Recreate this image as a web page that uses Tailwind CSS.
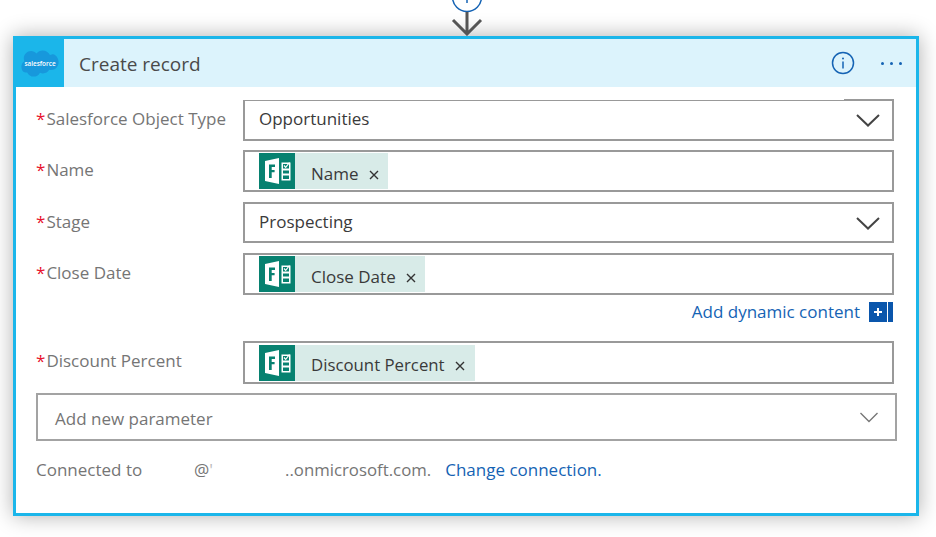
<!DOCTYPE html>
<html lang="en">
<head>
<meta charset="UTF-8" />
<title>Create record</title>
<script src="https://cdn.jsdelivr.net/npm/@tailwindcss/browser@4"></script>
</head>
<body class="bg-white h-[537px] w-[936px] overflow-hidden font-['Open_Sans',sans-serif] text-[17px]">

  <!-- connector arrow -->
  <div class="h-[36px] flex justify-center w-[906px] ml-[13px] pl-[2px]">
    <svg width="36" height="36" viewBox="0 0 36 36" fill="none">
      <circle cx="18" cy="-3" r="14.5" stroke="#1563b4" stroke-width="1.5" fill="white"/>
      <path d="M18 -9V3" stroke="#1563b4" stroke-width="1.5"/>
      <path d="M18 12V33M4 20L18 34L32 20" stroke="#555" stroke-width="3"/>
    </svg>
  </div>

  <!-- card -->
  <div class="ml-[13px] w-[906px] h-[480px] border-[3px] border-[#1bb6ea] bg-white shadow-[0_0_20px_rgba(0,0,0,0.32)]">
    <div class="flex items-center h-[48px] bg-[#dcf3fc]">
      <div class="w-[48px] h-[48px] bg-[#1bb6ea] flex items-center justify-center">
        <svg width="38" height="28" viewBox="0 0 38 28">
          <path d="M15.5 4.5C17 2.7 19.2 1.6 21.6 1.6C24.8 1.6 27.6 3.4 29 6.1C30.2 5.6 31.5 5.3 32 5.3C35.2 5.8 37.6 9.6 37.6 13C37.6 17.6 34.4 21 30 21C29.4 21 28.8 21 28.2 20.8C27 23 24.6 24.4 22 24.4C20.9 24.4 19.9 24.2 19 23.7C17.8 26.3 15.2 27.6 12.6 27.6C9.8 27.6 7.4 26 6.2 23.4C5.7 23.5 5.2 23.6 4.7 23.6C2 23.6 0.4 20.6 0.4 17.6C0.4 15.3 1.6 13.3 3.4 12.2C3 11.3 2.8 10.3 2.8 9.3C2.8 5.2 6.1 1.9 10.2 1.9C12.3 1.9 14.2 2.9 15.5 4.5Z" fill="#1798dc"/>
          <text x="19" y="16.5" text-anchor="middle" fill="white" font-size="6.4" font-family="Open Sans" font-weight="600">salesforce</text>
        </svg>
      </div>
      <div class="ml-[15px] mt-[3px] text-[19px] text-[#4a4a4a]">Create record</div>
      <div class="ml-auto flex items-center">
        <svg width="24" height="24" viewBox="0 0 24 24" fill="none" class="mr-[26px] -mt-[1px]">
          <circle cx="12" cy="12" r="10.5" stroke="#1563b4" stroke-width="1.5"/>
          <path d="M12 10.5V17.5" stroke="#1563b4" stroke-width="1.5"/>
          <circle cx="12" cy="7.5" r="1" fill="#1563b4"/>
        </svg>
        <div class="flex gap-[6px] mr-[14px]">
          <span class="w-[3px] h-[3px] rounded-full bg-[#1563b4]"></span>
          <span class="w-[3px] h-[3px] rounded-full bg-[#1563b4]"></span>
          <span class="w-[3px] h-[3px] rounded-full bg-[#1563b4]"></span>
        </div>
      </div>
    </div>

    <div class="pl-[20px] pt-[12px]">
      <!-- object type -->
      <div class="flex">
        <div class="w-[207px] text-[#757575] leading-[40px]"><span class="text-[#e8112d] mr-[1px]">*</span>Salesforce Object Type</div>
        <div class="relative w-[651px] h-[42px] border-2 border-[#999] flex items-center pl-[14px] pr-[12px] pb-[2px] text-[#3a3a3a]">
          <div class="absolute -top-[2px] -left-[2px] w-[601px] h-[1px] bg-white"></div>
          <span>Opportunities</span>
          <svg class="ml-auto mt-[2px]" width="24" height="14" viewBox="0 0 24 14" fill="none"><path d="M1 2L12 12.5L23 2" stroke="#444" stroke-width="2"/></svg>
        </div>
      </div>
      <!-- name -->
      <div class="flex mt-[9px]">
        <div class="w-[207px] text-[#757575] leading-[40px]"><span class="text-[#e8112d] mr-[1px]">*</span>Name</div>
        <div class="w-[651px] h-[42px] border-2 border-[#999] flex items-center pl-[14px]">
          <div class="flex items-center h-[36px] bg-[#d8ebe8] text-[#3a3a3a]">
            <svg width="36" height="36" viewBox="0 0 36 36"><rect width="36" height="36" fill="#078170"/><path d="M6 8L20 5V31L6 28Z" fill="white"/><path d="M10 11.5H16V14H12.7V17H15.6V19.3H12.7V25H10Z" fill="#078170"/><path d="M22.5 9.5H31.5V27.5H22.5ZM24 11V15.5H30V11ZM24 17.5V20.5H30V17.5ZM24 22.5V26H30V22.5Z" fill="white" fill-rule="evenodd"/><path d="M25 12.5L26.7 14.3L30.5 9.5" stroke="white" stroke-width="1.2" fill="none"/></svg>
            <span class="ml-[16px] mt-[5px]">Name</span>
            <svg class="ml-[10px] mr-[9px] mt-[7px]" width="10" height="10" viewBox="0 0 10 10" fill="none"><path d="M1 1L9 9M9 1L1 9" stroke="#333" stroke-width="1.4"/></svg>
          </div>
        </div>
      </div>
      <!-- stage -->
      <div class="flex mt-[10px]">
        <div class="w-[207px] text-[#757575] leading-[40px]"><span class="text-[#e8112d] mr-[1px]">*</span>Stage</div>
        <div class="w-[651px] h-[41px] border-2 border-[#999] flex items-center pl-[14px] pr-[12px] pb-[2px] text-[#3a3a3a]">
          <span>Prospecting</span>
          <svg class="ml-auto mt-[2px]" width="24" height="14" viewBox="0 0 24 14" fill="none"><path d="M1 2L12 12.5L23 2" stroke="#444" stroke-width="2"/></svg>
        </div>
      </div>
      <!-- close date -->
      <div class="flex mt-[10px]">
        <div class="w-[207px] text-[#757575] leading-[40px]"><span class="text-[#e8112d] mr-[1px]">*</span>Close Date</div>
        <div class="w-[651px] h-[42px] border-2 border-[#999] flex items-center pl-[14px]">
          <div class="flex items-center h-[36px] bg-[#d8ebe8] text-[#3a3a3a]">
            <svg width="36" height="36" viewBox="0 0 36 36"><rect width="36" height="36" fill="#078170"/><path d="M6 8L20 5V31L6 28Z" fill="white"/><path d="M10 11.5H16V14H12.7V17H15.6V19.3H12.7V25H10Z" fill="#078170"/><path d="M22.5 9.5H31.5V27.5H22.5ZM24 11V15.5H30V11ZM24 17.5V20.5H30V17.5ZM24 22.5V26H30V22.5Z" fill="white" fill-rule="evenodd"/><path d="M25 12.5L26.7 14.3L30.5 9.5" stroke="white" stroke-width="1.2" fill="none"/></svg>
            <span class="ml-[16px] mt-[5px]">Close Date</span>
            <svg class="ml-[10px] mr-[9px] mt-[7px]" width="10" height="10" viewBox="0 0 10 10" fill="none"><path d="M1 1L9 9M9 1L1 9" stroke="#333" stroke-width="1.4"/></svg>
          </div>
        </div>
      </div>
      <!-- dynamic content -->
      <div class="w-[857px] h-[46px] pt-[5px] flex justify-end items-start">
        <span class="text-[#1563b4] leading-[24px]">Add dynamic content</span>
        <div class="ml-[9px] mt-[2px] h-[20px] flex">
          <div class="w-[18px] bg-[#0a56ac] text-white flex items-center justify-center">
            <svg width="8" height="8" viewBox="0 0 8 8"><path d="M4 0V8M0 4H8" stroke="white" stroke-width="2"/></svg>
          </div>
          <div class="w-[1px] bg-white"></div>
          <div class="w-[5px] bg-[#0a56ac]"></div>
        </div>
      </div>
      <!-- discount -->
      <div class="flex">
        <div class="w-[207px] text-[#757575] leading-[40px]"><span class="text-[#e8112d] mr-[1px]">*</span>Discount Percent</div>
        <div class="w-[651px] h-[43px] border-2 border-[#999] flex items-center pl-[14px]">
          <div class="flex items-center h-[36px] bg-[#d8ebe8] text-[#3a3a3a]">
            <svg width="36" height="36" viewBox="0 0 36 36"><rect width="36" height="36" fill="#078170"/><path d="M6 8L20 5V31L6 28Z" fill="white"/><path d="M10 11.5H16V14H12.7V17H15.6V19.3H12.7V25H10Z" fill="#078170"/><path d="M22.5 9.5H31.5V27.5H22.5ZM24 11V15.5H30V11ZM24 17.5V20.5H30V17.5ZM24 22.5V26H30V22.5Z" fill="white" fill-rule="evenodd"/><path d="M25 12.5L26.7 14.3L30.5 9.5" stroke="white" stroke-width="1.2" fill="none"/></svg>
            <span class="ml-[16px] mt-[5px] text-[16.8px]">Discount Percent</span>
            <svg class="ml-[10px] mr-[10px] mt-[7px]" width="10" height="10" viewBox="0 0 10 10" fill="none"><path d="M1 1L9 9M9 1L1 9" stroke="#333" stroke-width="1.4"/></svg>
          </div>
        </div>
      </div>
      <!-- add new parameter -->
      <div class="w-[861px] h-[48px] mt-[9px] border-2 border-[#a3a3a3] flex items-center pl-[17px] pr-[17px] text-[#757575]">
        <span class="mt-[3px]">Add new parameter</span>
        <svg class="ml-auto" width="18" height="11" viewBox="0 0 18 11" fill="none"><path d="M0.5 1L9 9.5L17.5 1" stroke="#777" stroke-width="1.4"/></svg>
      </div>
      <!-- connection -->
      <div class="flex mt-[17px] leading-[24px] text-[#757575]">
        <span class="w-[158px]">Connected to</span>
        <span class="w-[91px]">@<span class="text-[#bbb]">'</span></span>
        <span class="text-[16.8px]">..onmicrosoft.com.</span>
        <a class="ml-[14px] text-[#1563b4]">Change connection.</a>
      </div>
    </div>
  </div>
</body>
</html>
